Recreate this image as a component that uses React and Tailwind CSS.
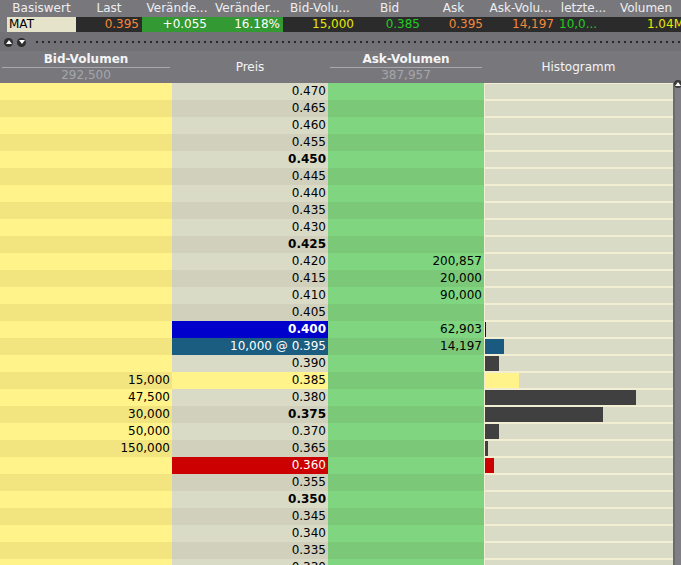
import React from 'react';

const topCols = [
  { label: 'Basiswert', value: 'MAT', cell: 'bg-[#e6e3cb] text-black pl-[2px] text-left' },
  { label: 'Last', value: '0.395', cell: 'bg-[#2b2b2b] text-[#f5883a] text-right pr-[3px]' },
  { label: 'Verände...', value: '+0.055', cell: 'bg-[#339933] text-white text-right pr-[5px]' },
  { label: 'Veränder...', value: '16.18%', cell: 'bg-[#339933] text-white text-right pr-[3px]' },
  { label: 'Bid-Volu...', value: '15,000', cell: 'bg-[#2b2b2b] text-[#e8e800] text-right pr-[3px]' },
  { label: 'Bid', value: '0.385', cell: 'bg-[#2b2b2b] text-[#22cc22] text-right pr-[2px]' },
  { label: 'Ask', value: '0.395', cell: 'bg-[#2b2b2b] text-[#f5883a] text-right pr-[2px]' },
  { label: 'Ask-Volu...', value: '14,197', cell: 'bg-[#2b2b2b] text-[#f5883a] text-right pr-[2px]' },
  { label: 'letzte...', value: '10,0...', cell: 'bg-[#2b2b2b] text-[#22cc22] text-left pl-[3px]' },
  { label: 'Volumen', value: '1.04M', cell: 'bg-[#2b2b2b] text-[#e8e800] text-right -mr-[3px]' },
];

const bidVol = { '0.385': '15,000', '0.380': '47,500', '0.375': '30,000', '0.370': '50,000', '0.365': '150,000' };
const askVol = { '0.420': '200,857', '0.415': '20,000', '0.410': '90,000', '0.400': '62,903', '0.395': '14,197' };
const hist = {
  '0.400': { w: 1, c: 'bg-[#0000b4]' },
  '0.395': { w: 19, c: 'bg-[#1a5a80]' },
  '0.390': { w: 14, c: 'bg-[#404040]' },
  '0.385': { w: 34, c: 'bg-[#fff38a]' },
  '0.380': { w: 151, c: 'bg-[#404040]' },
  '0.375': { w: 118, c: 'bg-[#404040]' },
  '0.370': { w: 14, c: 'bg-[#404040]' },
  '0.365': { w: 3, c: 'bg-[#404040]' },
  '0.360': { w: 9, c: 'bg-[#cc0000]' },
};
const special = {
  '0.400': 'bg-[#0000cc] text-white font-bold',
  '0.395': 'bg-[#1a5d80] text-white',
  '0.385': 'bg-[#fff38a] text-black',
  '0.360': 'bg-[#cc0000] text-white',
};

const rows = Array.from({ length: 29 }, (_, i) => {
  const n = 470 - i * 5;
  const p = (n / 1000).toFixed(3);
  return { p, even: i % 2 === 0, bold: n % 25 === 0 };
});

const Row = ({ r }) => {
  const bar = hist[r.p];
  const priceCls = special[r.p] || `${r.even ? 'bg-[#dadbc6]' : 'bg-[#d0d0bc]'} text-black ${r.bold ? 'font-bold' : ''}`;
  return (
    <div className="grid grid-cols-[172px_156px_156px_189px] h-[17px] leading-[17px]">
      <div className={`${r.even ? 'bg-[#fff38a]' : 'bg-[#f2e580]'} text-right pr-[2px] text-black`}>{bidVol[r.p]}</div>
      <div className={`${priceCls} text-right pr-[2px]`}>{r.p === '0.395' ? '10,000 @ 0.395' : r.p}</div>
      <div className={`${r.even ? 'bg-[#80d680]' : 'bg-[#7bc978]'} text-right pr-[2px] text-black`}>{askVol[r.p]}</div>
      <div className="bg-[#f2eed4] pl-px py-px">
        <div className="h-[15px] bg-[#dadbc6] flex">
          {bar && <div className={`h-full ${bar.c}`} style={{ width: bar.w }} />}
        </div>
      </div>
    </div>
  );
};

const RoundBtn = ({ down }) => (
  <div className="w-[9px] h-[9px] rounded-full bg-[#2e2e2e] flex items-center justify-center">
    {down
      ? <div className="w-0 h-0 border-x-[3px] border-x-transparent border-t-[4px] border-t-white" />
      : <div className="w-0 h-0 border-x-[3px] border-x-transparent border-b-[4px] border-b-white" />}
  </div>
);

const App = () => {
  return (
    <div className="w-[681px] h-[565px] overflow-hidden bg-[#78787c] text-[12px] font-['DejaVu_Sans',sans-serif]">

      {/* Quote strip */}
      <div className="grid grid-cols-[7px_69px_66px_70px_71px_74px_65px_63px_71px_55px_70px] text-[#eeeef2]">
        <div className="h-[17px]" />
        {topCols.map((c) => (
          <div key={c.label} className="h-[17px] leading-[17px] text-center whitespace-nowrap overflow-hidden">{c.label}</div>
        ))}
        <div className="h-[15px]" />
        {topCols.map((c) => (
          <div key={c.label + 'v'} className={`h-[15px] leading-[15px] whitespace-nowrap overflow-hidden ${c.cell}`}>{c.value}</div>
        ))}
      </div>

      {/* Toolbar */}
      <div className="h-[19px] bg-[#727276] flex items-center pl-[4px] gap-[4px] pt-px">
        <RoundBtn />
        <RoundBtn down />
        <div className="flex-1 h-[4px] ml-[4px] bg-[radial-gradient(circle,#2a2a2a_1px,transparent_1.6px)] bg-[length:6px_4px]" />
      </div>

      {/* Column headers */}
      <div className="grid grid-cols-[172px_156px_156px_189px_8px] h-[32px] text-[#f4f4f6]">
        <div className="flex flex-col px-[2px]">
          <div className="h-[16px] leading-[16px] text-center font-bold">Bid-Volumen</div>
          <div className="h-px bg-[#a9a9ad]" />
          <div className="h-[15px] leading-[15px] text-center text-[#a6a6aa]">292,500</div>
        </div>
        <div className="flex items-center justify-center">Preis</div>
        <div className="flex flex-col px-[2px]">
          <div className="h-[16px] leading-[16px] text-center font-bold">Ask-Volumen</div>
          <div className="h-px bg-[#a9a9ad]" />
          <div className="h-[15px] leading-[15px] text-center text-[#a6a6aa]">387,957</div>
        </div>
        <div className="flex items-center justify-center">Histogramm</div>
        <div />
      </div>

      {/* Depth ladder */}
      <div className="flex">
        <div className="flex flex-col">
          {rows.map((r) => <Row key={r.p} r={r} />)}
        </div>
        <div className="w-[8px] bg-[#808084] border-l-2 border-[#6c6c70] relative">
          <div className="absolute -left-[1px] top-[-3px] w-[8px] h-[8px] rounded-full bg-[#3a3a3a] flex items-center justify-center">
            <div className="w-0 h-0 border-x-[3px] border-x-transparent border-b-[4px] border-b-white" />
          </div>
        </div>
      </div>

    </div>
  );
};

export default App;
